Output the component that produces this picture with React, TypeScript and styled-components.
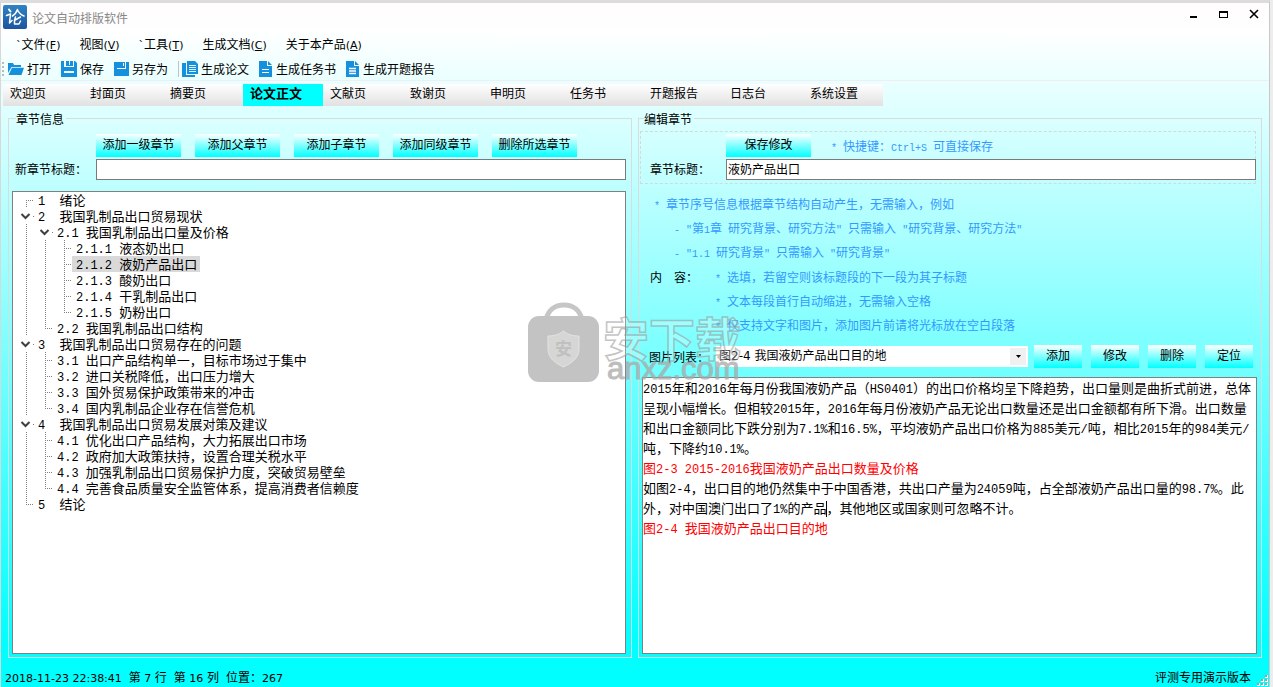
import React from "react";
import styled, { createGlobalStyle, css } from "styled-components";

const GlobalStyle = createGlobalStyle`
  * { box-sizing: border-box; }
  body {
    margin: 0;
    background: #ededed;
    font-family: "Noto Sans CJK SC", sans-serif;
    font-size: 12px;
    color: #000;
  }
  button, input, select { font: inherit; color: inherit; }
`;

const Window = styled.div`
  display: flex;
  flex-direction: column;
  min-height: 100vh;
  margin-right: 3px;
  border-top: 3px solid #dcdcdc;
  border-left: 1px solid #d8d8d8;
  border-right: 1px solid #c8c8c8;
  background: linear-gradient(#fffcfc 0, #fff 28px, #0ff 94%);
`;

const TitleBar = styled.header`
  display: flex;
  align-items: center;
  height: 28px;
  padding: 0 8px 0 2px;
  gap: 5px;
`;

const AppTitle = styled.h1`
  flex: 1;
  margin: 0;
  padding-top: 2px;
  font-size: 12px;
  font-weight: 400;
  line-height: 16px;
  color: #888;
`;

const WindowControls = styled.div`
  display: flex;
  gap: 18px;
  padding-bottom: 6px;
`;

const WindowButton = styled.button`
  display: flex;
  width: 12px;
  height: 12px;
  padding: 0;
  border: 0;
  background: none;
`;

const MenuBar = styled.nav`
  display: flex;
  align-items: center;
  gap: 19px;
  height: 26px;
  padding-left: 15px;
`;

const MenuItem = styled.button`
  padding: 0;
  border: 0;
  background: none;
  line-height: 16px;
  white-space: nowrap;
`;

const Toolbar = styled.div`
  display: flex;
  align-items: center;
  gap: 10px;
  height: 24px;
  padding-left: 1px;
  border-bottom: 1px solid #f0eef0;
`;

const Grip = styled.span`
  width: 2px;
  height: 14px;
  margin-right: -6px;
  background: repeating-linear-gradient(#b8bcbc 0 2px, transparent 2px 4px);
`;

const ToolDivider = styled.span`
  width: 1px;
  height: 16px;
  margin-right: -7px;
  background: #bfc4c4;
`;

const ToolButton = styled.button`
  display: flex;
  align-items: center;
  gap: 3px;
  padding: 0;
  border: 0;
  background: none;
  line-height: 16px;
`;

const TabStrip = styled.div`
  display: flex;
  align-self: flex-start;
  margin: 3px 0 6px 2px;
  background: linear-gradient(#fff, #e1e1e1);
`;

const Tab = styled.button<{ $active?: boolean }>`
  width: 80px;
  height: 22px;
  padding: 0 0 4px 7px;
  border: 0;
  background: none;
  text-align: left;
  white-space: nowrap;
  line-height: 18px;
  ${(p) => p.$active && css`
    background: #0ff;
    font-size: 13px;
    font-weight: 700;
  `}
`;

const Panels = styled.main`
  flex: 1;
  display: grid;
  grid-template-columns: repeat(2, minmax(0, 1fr));
  gap: 6px;
  padding: 0 7px;
`;

const Group = styled.fieldset<{ $inset: number }>`
  display: flex;
  flex-direction: column;
  min-width: 0;
  margin: 0;
  padding: 6px 5px 3px ${(p) => p.$inset}px;
  border: 1px solid #d8dcdc;
`;

const GroupTitle = styled.legend`
  margin-left: 4px;
  padding: 0 2px 0 0;
  line-height: 13px;
`;

const Form = styled.div<{ $framed?: boolean }>`
  display: grid;
  grid-template-columns: ${(p) => (p.$framed ? 85 : 84)}px 1fr;
  row-gap: 2px;
  border: ${(p) => (p.$framed ? "1px dashed #d0dcdc" : "0")};
  padding: ${(p) => (p.$framed ? "2px 0 3px" : "3px 0 0")};
`;

const ButtonRow = styled.div<{ $gap: number }>`
  grid-column: 2;
  display: flex;
  align-items: center;
  gap: ${(p) => p.$gap}px;
  height: 23px;
`;

const ActionButton = styled.button<{ $small?: boolean }>`
  flex: none;
  width: ${(p) => (p.$small ? 48 : 85)}px;
  height: 23px;
  padding: 0 0 3px;
  border: 0;
  background: linear-gradient(#fff, #0ff);
  white-space: nowrap;
  line-height: 20px;
`;

const FieldLabel = styled.label<{ $indent: number }>`
  padding-left: ${(p) => p.$indent}px;
  line-height: 20px;
  white-space: pre;
`;

const TextField = styled.input<{ $flush?: boolean }>`
  min-width: 0;
  height: 21px;
  margin-right: ${(p) => (p.$flush ? -1 : 0)}px;
  padding: 0 1px 2px;
  border: 1px solid #7a7a7a;
  border-radius: 0;
  background: #fff;
  outline: none;
`;

/* line-height 1 keeps a half-width run from stretching the line it sits in */
const Latin = styled.span<{ $size: number }>`
  font-family: "Liberation Mono", monospace;
  font-size: ${(p) => p.$size}px;
  line-height: 1;
`;

const UiLatin = styled.span`
  font-family: "DejaVu Sans", sans-serif;
  font-size: 11px;
  line-height: 1;
`;

const Tree = styled.ul`
  flex: 1;
  margin: 11px 0 0;
  padding: 0 0 0 2px;
  border: 1px solid #808080;
  background: #fff;
  list-style: none;
`;

const TreeRow = styled.li`
  display: flex;
  height: 16px;
`;

type GuideKind = "line" | "tee" | "end" | "start" | "open";

const dotsDown = "repeating-linear-gradient(#808080 0 1px, transparent 1px 2px)";
const dotsAcross = "repeating-linear-gradient(90deg, #808080 0 1px, transparent 1px 2px)";
const guideBackground: Record<GuideKind, string> = {
  line: `${dotsDown} 11px 0 / 1px 16px no-repeat`,
  tee: `${dotsDown} 11px 0 / 1px 16px no-repeat, ${dotsAcross} 11px 8px / 8px 1px no-repeat`,
  end: `${dotsDown} 11px 0 / 1px 8px no-repeat, ${dotsAcross} 11px 8px / 8px 1px no-repeat`,
  start: `${dotsDown} 11px 8px / 1px 8px no-repeat, ${dotsAcross} 11px 8px / 8px 1px no-repeat`,
  open: `linear-gradient(#808080, #808080) 18px 8px / 1px 1px no-repeat`,
};

const GuideCell = styled.span<{ $kind: GuideKind }>`
  flex: none;
  width: 19px;
  height: 16px;
  background: ${(p) => guideBackground[p.$kind]};
  svg { display: block; }
`;

const TreeLabel = styled.span<{ $selected?: boolean }>`
  padding: 0 3px 0 4px;
  font-size: 13px;
  line-height: 16px;
  white-space: pre;
  background: ${(p) => (p.$selected ? "#d9d9d9" : "transparent")};
`;

const Hint = styled.p<{ $indent?: number }>`
  margin: 0;
  padding-left: ${(p) => p.$indent ?? 0}px;
  line-height: 24px;
  white-space: pre;
  color: #3399ff;
`;

const HintBlock = styled.div`
  padding: 8px 0 1px 14px;
`;

const ContentHints = styled.div`
  display: grid;
  grid-template-columns: 75px 1fr;
  line-height: 24px;
`;

const ContentLabel = styled.span`
  padding-left: 10px;
  white-space: pre;
`;

const PictureRow = styled.div`
  display: flex;
  align-items: center;
  gap: 9px;
  margin-top: 8px;
  padding-right: 3px;
`;

const PictureChoice = styled.div`
  flex: 1;
  display: flex;
  align-items: center;
  min-width: 0;
  margin-right: -3px;
`;

const ChoiceLabel = styled(FieldLabel)`
  flex: none;
  width: 76px;
`;

const SelectFrame = styled.div`
  flex: 1;
  position: relative;
  min-width: 0;
  padding: 2px 2px 2px 0;
  background: #fff;
`;

const Select = styled.select`
  display: block;
  width: 100%;
  height: 17px;
  padding: 0 18px 1px 3px;
  border: 0;
  border-radius: 0;
  appearance: none;
  background: linear-gradient(#f0f0f0, #f0f0f0) right / 16px 100% no-repeat;
  font-family: "DejaVu Sans", "Noto Sans CJK SC", sans-serif;
  line-height: 16px;
`;

const SelectArrow = styled.svg`
  position: absolute;
  right: 7px;
  top: 9px;
  pointer-events: none;
`;

const Editor = styled.div`
  flex: 1;
  margin: 9px -1px 0 2px;
  border: 1px solid #808080;
  background: #fff;
  font-size: 13px;
  line-height: 20px;
  outline: none;
`;

const Paragraph = styled.p<{ $figure?: boolean }>`
  margin: 0;
  white-space: pre-wrap;
  color: ${(p) => (p.$figure ? "#f00" : "#000")};
`;

const Caret = styled.span`
  display: inline-block;
  width: 1px;
  height: 16px;
  margin-right: -1px;
  vertical-align: middle;
  background: #000;
`;

const StatusBar = styled.footer`
  display: flex;
  align-items: center;
  height: 29px;
  padding: 8px 1px 0 4px;
  line-height: 16px;
`;

const StatusText = styled.div`
  flex: 1;
  display: flex;
  gap: 7px;
  white-space: pre;
`;

const SizeGrip = styled.svg`
  align-self: flex-end;
  margin-left: 6px;
`;

const Watermark = styled.svg`
  position: absolute;
  left: 526px;
  top: 300px;
  pointer-events: none;
`;

/* Sets ASCII runs in a half-width face beside full-width Han characters. */
function Mixed({ text, size = 10 }: { text: string; size?: number }) {
  return (
    <>
      {text.split(/([\x20-\x7e]+)/).map((part, i) =>
        i % 2 ? <Latin key={i} $size={size}>{part}</Latin> : part
      )}
    </>
  );
}

function UiText({ text }: { text: string }) {
  return (
    <span>
      {text.split(/([\x20-\x7e]+)/).map((part, i) =>
        i % 2 ? <UiLatin key={i}>{part}</UiLatin> : part
      )}
    </span>
  );
}

const BLUE = "#1590dc";

const OpenIcon = () => (
  <svg width="16" height="16" viewBox="0 0 16 16" fill={BLUE}>
    <path d="M0 2h5l1 2h7v2H3.500L0 12z" />
    <path d="M4 6.700h12L13.500 14H0.500z" />
  </svg>
);
const SaveIcon = () => (
  <svg width="16" height="16" viewBox="0 0 16 16">
    <path d="M0 0h14l2 2v14H0z" fill={BLUE} />
    <path d="M3 0h2v5H3zM8 0h1v4H8zM12 0h1v5h-1zM3 5h10v1H3zM3 10h10v2H3z" fill="#f4ffff" />
  </svg>
);
const SaveAsIcon = () => (
  <svg width="15" height="16" viewBox="0 0 15 16">
    <path d="M0 1h15v14H0z" fill={BLUE} />
    <path d="M3 7h8V1h1v7H3z" fill="#fff" />
    <path d="M9 2h1v3H9z" fill="#fff" />
  </svg>
);
const PapersIcon = () => (
  <svg width="16" height="16" viewBox="0 0 16 16">
    <path d="M0 2h4v12h9v2H0z" fill={BLUE} />
    <path d="M5 0h8l3 3v10H5z" fill={BLUE} />
    <path d="M7 4.500h7M7 6.500h7M7 8.500h7M7 10.500h7" stroke="#d8f2ff" />
  </svg>
);
const PageIcon = ({ lines }: { lines: number }) => (
  <svg width="14" height="16" viewBox="0 0 14 16">
    <path d="M0 0h8v5h5v11H0z" fill={BLUE} />
    <path d="M9 0l4 4H9z" fill={BLUE} />
    <path
      d={lines === 2 ? "M3 8.500h7M3 11.500h7" : "M3 7.500h7M3 10h7M3 12.500h7"}
      stroke="#fff"
      strokeWidth={lines === 2 ? 1 : 1.5}
    />
  </svg>
);

const AppIcon = () => (
  <svg width="24" height="24" viewBox="0 0 24 24" role="img" aria-label="论">
    <defs>
      <linearGradient id="appIcon" x1="0" y1="0" x2="0" y2="1">
        <stop offset="0" stopColor="#2f83c4" />
        <stop offset="1" stopColor="#1c549e" />
      </linearGradient>
    </defs>
    <rect width="24" height="24" rx="2" fill="url(#appIcon)" />
    <g stroke="#fff" fill="none" strokeLinecap="round" strokeLinejoin="round">
      <path d="M6 4.500l1.500 2" strokeWidth="2" />
      <path d="M3.500 10.500l4-1.500-1 9 2.500-2.500" strokeWidth="1.500" />
      <path d="M14.500 4.500c-1 3-2.500 5-5 6.500M14.500 5c1.500 3 3.500 5 6.500 6" strokeWidth="1.600" />
      <path d="M12.500 12l-1 3v4h4.500l1.500-3M17.500 12l-5.500 3" strokeWidth="1.500" />
    </g>
  </svg>
);

const Chevron = () => (
  <svg width="19" height="16" viewBox="0 0 19 16">
    <path d="M6.500 6l4 4 4-4" fill="none" stroke="#404040" strokeWidth="2" />
  </svg>
);

type Node = { guides: GuideKind[]; text: string; selected?: boolean };

const nodes: Node[] = [
  { guides: ["start"], text: "1  绪论" },
  { guides: ["open"], text: "2  我国乳制品出口贸易现状" },
  { guides: ["line", "open"], text: "2.1 我国乳制品出口量及价格" },
  { guides: ["line", "line", "tee"], text: "2.1.1 液态奶出口" },
  { guides: ["line", "line", "tee"], text: "2.1.2 液奶产品出口", selected: true },
  { guides: ["line", "line", "tee"], text: "2.1.3 酸奶出口" },
  { guides: ["line", "line", "tee"], text: "2.1.4 干乳制品出口" },
  { guides: ["line", "line", "end"], text: "2.1.5 奶粉出口" },
  { guides: ["line", "end"], text: "2.2 我国乳制品出口结构" },
  { guides: ["open"], text: "3  我国乳制品出口贸易存在的问题" },
  { guides: ["line", "tee"], text: "3.1 出口产品结构单一，目标市场过于集中" },
  { guides: ["line", "tee"], text: "3.2 进口关税降低，出口压力增大" },
  { guides: ["line", "tee"], text: "3.3 国外贸易保护政策带来的冲击" },
  { guides: ["line", "end"], text: "3.4 国内乳制品企业存在信誉危机" },
  { guides: ["open"], text: "4  我国乳制品出口贸易发展对策及建议" },
  { guides: ["line", "tee"], text: "4.1 优化出口产品结构，大力拓展出口市场" },
  { guides: ["line", "tee"], text: "4.2 政府加大政策扶持，设置合理关税水平" },
  { guides: ["line", "tee"], text: "4.3 加强乳制品出口贸易保护力度，突破贸易壁垒" },
  { guides: ["line", "end"], text: "4.4 完善食品质量安全监管体系，提高消费者信赖度" },
  { guides: ["end"], text: "5  结论" },
];

const menus = [
  ["`文件", "F"],
  ["视图", "V"],
  ["`工具", "T"],
  ["生成文档", "C"],
  ["关于本产品", "A"],
];

const tabs = ["欢迎页", "封面页", "摘要页", "论文正文", "文献页", "致谢页", "申明页", "任务书", "开题报告", "日志台", "系统设置"];
const chapterActions = ["添加一级章节", "添加父章节", "添加子章节", "添加同级章节", "删除所选章节"];
const pictureActions = ["添加", "修改", "删除", "定位"];
const cursorStatus = ["第 7 行", "第 16 列", "位置：267"];

function ChapterPanel() {
  return (
    <Group $inset={3}>
      <GroupTitle>章节信息</GroupTitle>
      <Form>
        <ButtonRow $gap={14}>
          {chapterActions.map((a) => <ActionButton key={a}>{a}</ActionButton>)}
        </ButtonRow>
        <FieldLabel htmlFor="new-title" $indent={3}>新章节标题：</FieldLabel>
        <TextField id="new-title" />
      </Form>
      <Tree role="tree" aria-label="章节信息">
        {nodes.map((n) => (
          <TreeRow key={n.text} role="treeitem" aria-selected={!!n.selected} aria-level={n.guides.length}>
            {n.guides.map((g, i) => (
              <GuideCell key={i} $kind={g}>{g === "open" && <Chevron />}</GuideCell>
            ))}
            <TreeLabel $selected={n.selected}><Mixed text={n.text} size={12} /></TreeLabel>
          </TreeRow>
        ))}
      </Tree>
    </Group>
  );
}

function EditPanel() {
  return (
    <Group $inset={1}>
      <GroupTitle>编辑章节</GroupTitle>
      <Form $framed>
        <ButtonRow $gap={20}>
          <ActionButton>保存修改</ActionButton>
          <Hint><Mixed text="* 快捷键：Ctrl+S 可直接保存" /></Hint>
        </ButtonRow>
        <FieldLabel htmlFor="title" $indent={9}>章节标题：</FieldLabel>
        <TextField id="title" defaultValue="液奶产品出口" $flush />
      </Form>
      <HintBlock>
        <Hint><Mixed text="* 章节序号信息根据章节结构自动产生，无需输入，例如" /></Hint>
        <Hint $indent={20}><Mixed text={'- "第1章 研究背景、研究方法" 只需输入 "研究背景、研究方法"'} /></Hint>
        <Hint $indent={20}><Mixed text={'- "1.1 研究背景" 只需输入 "研究背景"'} /></Hint>
      </HintBlock>
      <ContentHints>
        <ContentLabel id="content-label">内　容：</ContentLabel>
        <div>
          <Hint><Mixed text="* 选填，若留空则该标题段的下一段为其子标题" /></Hint>
          <Hint><Mixed text="* 文本每段首行自动缩进，无需输入空格" /></Hint>
          <Hint><Mixed text="* 仅支持文字和图片，添加图片前请将光标放在空白段落" /></Hint>
        </div>
      </ContentHints>
      <PictureRow>
        <PictureChoice>
          <ChoiceLabel htmlFor="picture" $indent={9}>图片列表：</ChoiceLabel>
          <SelectFrame>
            <Select id="picture">
              <option>图2-4 我国液奶产品出口目的地</option>
            </Select>
            <SelectArrow width="5" height="3" viewBox="0 0 5 3"><path d="M0 0h5L2.500 3z" /></SelectArrow>
          </SelectFrame>
        </PictureChoice>
        {pictureActions.map((a) => <ActionButton key={a} $small>{a}</ActionButton>)}
      </PictureRow>
      <Editor role="textbox" aria-multiline="true" aria-labelledby="content-label" contentEditable suppressContentEditableWarning spellCheck={false}>
        <Paragraph>
          <Mixed size={12} text="2015年和2016年每月份我国液奶产品（HS0401）的出口价格均呈下降趋势，出口量则是曲折式前进，总体呈现小幅增长。但相较2015年，2016年每月份液奶产品无论出口数量还是出口金额都有所下滑。出口数量和出口金额同比下跌分别为7.1%和16.5%，平均液奶产品出口价格为885美元/吨，相比2015年的984美元/吨，下降约10.1%。" />
        </Paragraph>
        <Paragraph $figure><Mixed size={12} text="图2-3 2015-2016我国液奶产品出口数量及价格" /></Paragraph>
        <Paragraph>
          <Mixed size={12} text="如图2-4，出口目的地仍然集中于中国香港，共出口产量为24059吨，占全部液奶产品出口量的98.7%。此外，对中国澳门出口了1%的产品" />
          <Caret />
          <Mixed size={12} text="，其他地区或国家则可忽略不计。" />
        </Paragraph>
        <Paragraph $figure><Mixed size={12} text="图2-4 我国液奶产品出口目的地" /></Paragraph>
      </Editor>
    </Group>
  );
}

export default function App() {
  return (
    <>
      <GlobalStyle />
      <Window>
        <TitleBar>
          <AppIcon />
          <AppTitle>论文自动排版软件</AppTitle>
          <WindowControls>
            <WindowButton aria-label="最小化">
              <svg width="12" height="12"><path d="M1 8h7v2H1z" /></svg>
            </WindowButton>
            <WindowButton aria-label="最大化">
              <svg width="12" height="12"><path d="M0 3h9v7H0zM1 5v4h7V5z" fillRule="evenodd" /></svg>
            </WindowButton>
            <WindowButton aria-label="关闭">
              <svg width="12" height="12"><path d="M1 2l8 8M9 2L1 10" stroke="#000" strokeWidth="1.600" /></svg>
            </WindowButton>
          </WindowControls>
        </TitleBar>
        <MenuBar>
          {menus.map(([name, key]) => (
            <MenuItem key={key}>
              <UiText text={name} />
              <UiLatin>(<u>{key}</u>)</UiLatin>
            </MenuItem>
          ))}
        </MenuBar>
        <Toolbar>
          <Grip />
          <ToolButton><OpenIcon />打开</ToolButton>
          <ToolButton><SaveIcon />保存</ToolButton>
          <ToolButton><SaveAsIcon />另存为</ToolButton>
          <ToolDivider />
          <ToolButton><PapersIcon />生成论文</ToolButton>
          <ToolButton><PageIcon lines={2} />生成任务书</ToolButton>
          <ToolButton><PageIcon lines={3} />生成开题报告</ToolButton>
        </Toolbar>
        <TabStrip role="tablist">
          {tabs.map((t) => (
            <Tab key={t} role="tab" aria-selected={t === "论文正文"} $active={t === "论文正文"}>{t}</Tab>
          ))}
        </TabStrip>
        <Panels>
          <ChapterPanel />
          <EditPanel />
        </Panels>
        <StatusBar>
          <StatusText>
            <UiText text="2018-11-23 22:38:41" />
            {cursorStatus.map((s) => <UiText key={s} text={s} />)}
          </StatusText>
          <span>评测专用演示版本</span>
          <SizeGrip width="11" height="12" viewBox="0 0 11 12">
            <path d="M8 0h3v3H8zM4 4h3v3H4zM8 4h3v3H8zM0 8h3v3H0zM4 8h3v3H4zM8 8h3v3H8z" fill="#fff" />
            <path d="M8 0h2v2H8zM4 4h2v2H4zM8 4h2v2H8zM0 8h2v2H0zM4 8h2v2H4zM8 8h2v2H8z" fill="#a0a0a0" />
          </SizeGrip>
        </StatusBar>
      </Window>
      <Watermark width="220" height="90" viewBox="526 300 220 90">
        <g opacity="0.750">
          <path d="M546 320c2-10 9-15 18-15s16 5 18 15" fill="none" stroke="#b4b4b4" strokeWidth="5" />
          <rect x="528" y="316" width="71" height="66" rx="11" fill="#b0b0b0" />
          <path d="M563.500 331c5 4 10 5 15.500 5v13c0 9-7 14-15.500 18-8.500-4-15.500-9-15.500-18v-13c5.500 0 10.500-1 15.500-5z" fill="#c9c9c7" stroke="#dadada" />
          <text x="555" y="355" fontSize="17" fontWeight="700" fill="#acacac">安</text>
          <text x="603" y="356" fontSize="46" fontWeight="700" fill="#fff" fillOpacity="0.300" stroke="#9c9c9c" strokeWidth="1.500" strokeOpacity="0.800">安下载</text>
          <text x="607" y="379" fontFamily="Liberation Sans, sans-serif" fontSize="31" fill="#a8a8a8" stroke="#a8a8a8">anxz.com</text>
        </g>
      </Watermark>
    </>
  );
}
